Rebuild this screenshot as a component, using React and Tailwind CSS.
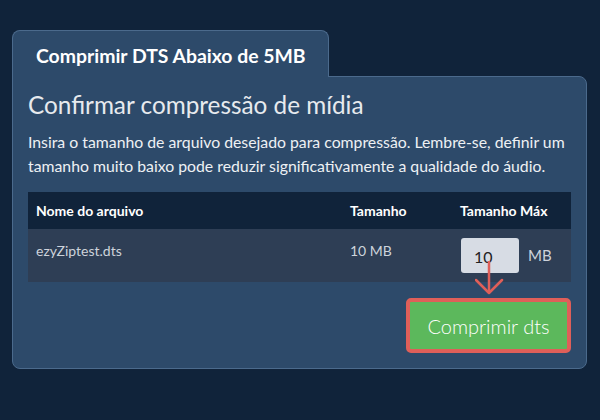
import React from 'react';

const font = { fontFamily: 'Lato, "Open Sans", sans-serif' };

const App = () => {
    return (
        <div className="w-[600px] h-[420px] bg-[#10233a] pt-[30px] pl-3 pr-[13px]" style={font}>
            {/* Tab */}
            <div className="relative z-10 -mb-px w-[317px] h-[47px] flex items-center pl-[23px] pt-1 bg-[#2d4a6a] border border-b-0 border-[#4b6a8c] rounded-t-lg">
                <span className="text-[19.4px] leading-[1.2] font-bold text-white">Comprimir DTS Abaixo de 5MB</span>
            </div>

            {/* Panel */}
            <div className="bg-[#2d4a6a] border border-[#4b6a8c] rounded-b-lg rounded-tr-lg px-[15px] pt-[13px] pb-[15px]">
                <h2 className="text-[24.3px] leading-[1.2] text-[#e7eaee] font-normal">Confirmar compressão de mídia</h2>
                <p className="mt-[11px] text-[15.8px] leading-6 text-[#eef1f4]">
                    Insira o tamanho de arquivo desejado para compressão. Lembre-se, definir um tamanho muito baixo pode reduzir significativamente a qualidade do áudio.
                </p>

                <table className="mt-[14px] w-full border-collapse text-[14px]">
                    <thead>
                        <tr className="bg-[#10233a] text-white font-bold h-[37px]">
                            <th className="w-[314px] text-left pl-2 font-bold">Nome do arquivo</th>
                            <th className="w-[110px] text-left pl-2 font-bold">Tamanho</th>
                            <th className="text-left pl-2 font-bold">Tamanho Máx</th>
                        </tr>
                    </thead>
                    <tbody>
                        <tr className="bg-[#2e3e55] text-[#cdd3db]">
                            <td className="align-top pl-2 pt-[11px]">ezyZiptest.dts</td>
                            <td className="align-top pl-2 pt-[11px]">10 MB</td>
                            <td className="pl-[9px] py-[9px]">
                                <div className="flex items-center gap-[9px]">
                                    <div className="relative w-[58px] h-[35px] bg-[#d7dce4] rounded-[3px] flex items-center pl-[13px] pt-0.5 text-[16px] text-[#222]">
                                        10
                                        <svg className="absolute left-[14px] top-[22px]" width="30" height="36" viewBox="0 0 30 36" fill="none">
                                            <path d="M14 1 V33" stroke="#df5f59" strokeWidth="2.5" />
                                            <path d="M1 20 L14 33 L27 20" stroke="#df5f59" strokeWidth="2.5" strokeLinecap="round" strokeLinejoin="round" />
                                        </svg>
                                    </div>
                                    <span className="text-[15px] text-[#cdd3db]">MB</span>
                                </div>
                            </td>
                        </tr>
                    </tbody>
                </table>

                <div className="flex justify-end mt-4">
                    <button className="w-[165px] h-[55px] bg-[#5cb85c] border-4 border-[#df5f59] rounded-[5px] text-white text-[20px] font-light">
                        Comprimir dts
                    </button>
                </div>
            </div>
        </div>
    );
};

export default App;
